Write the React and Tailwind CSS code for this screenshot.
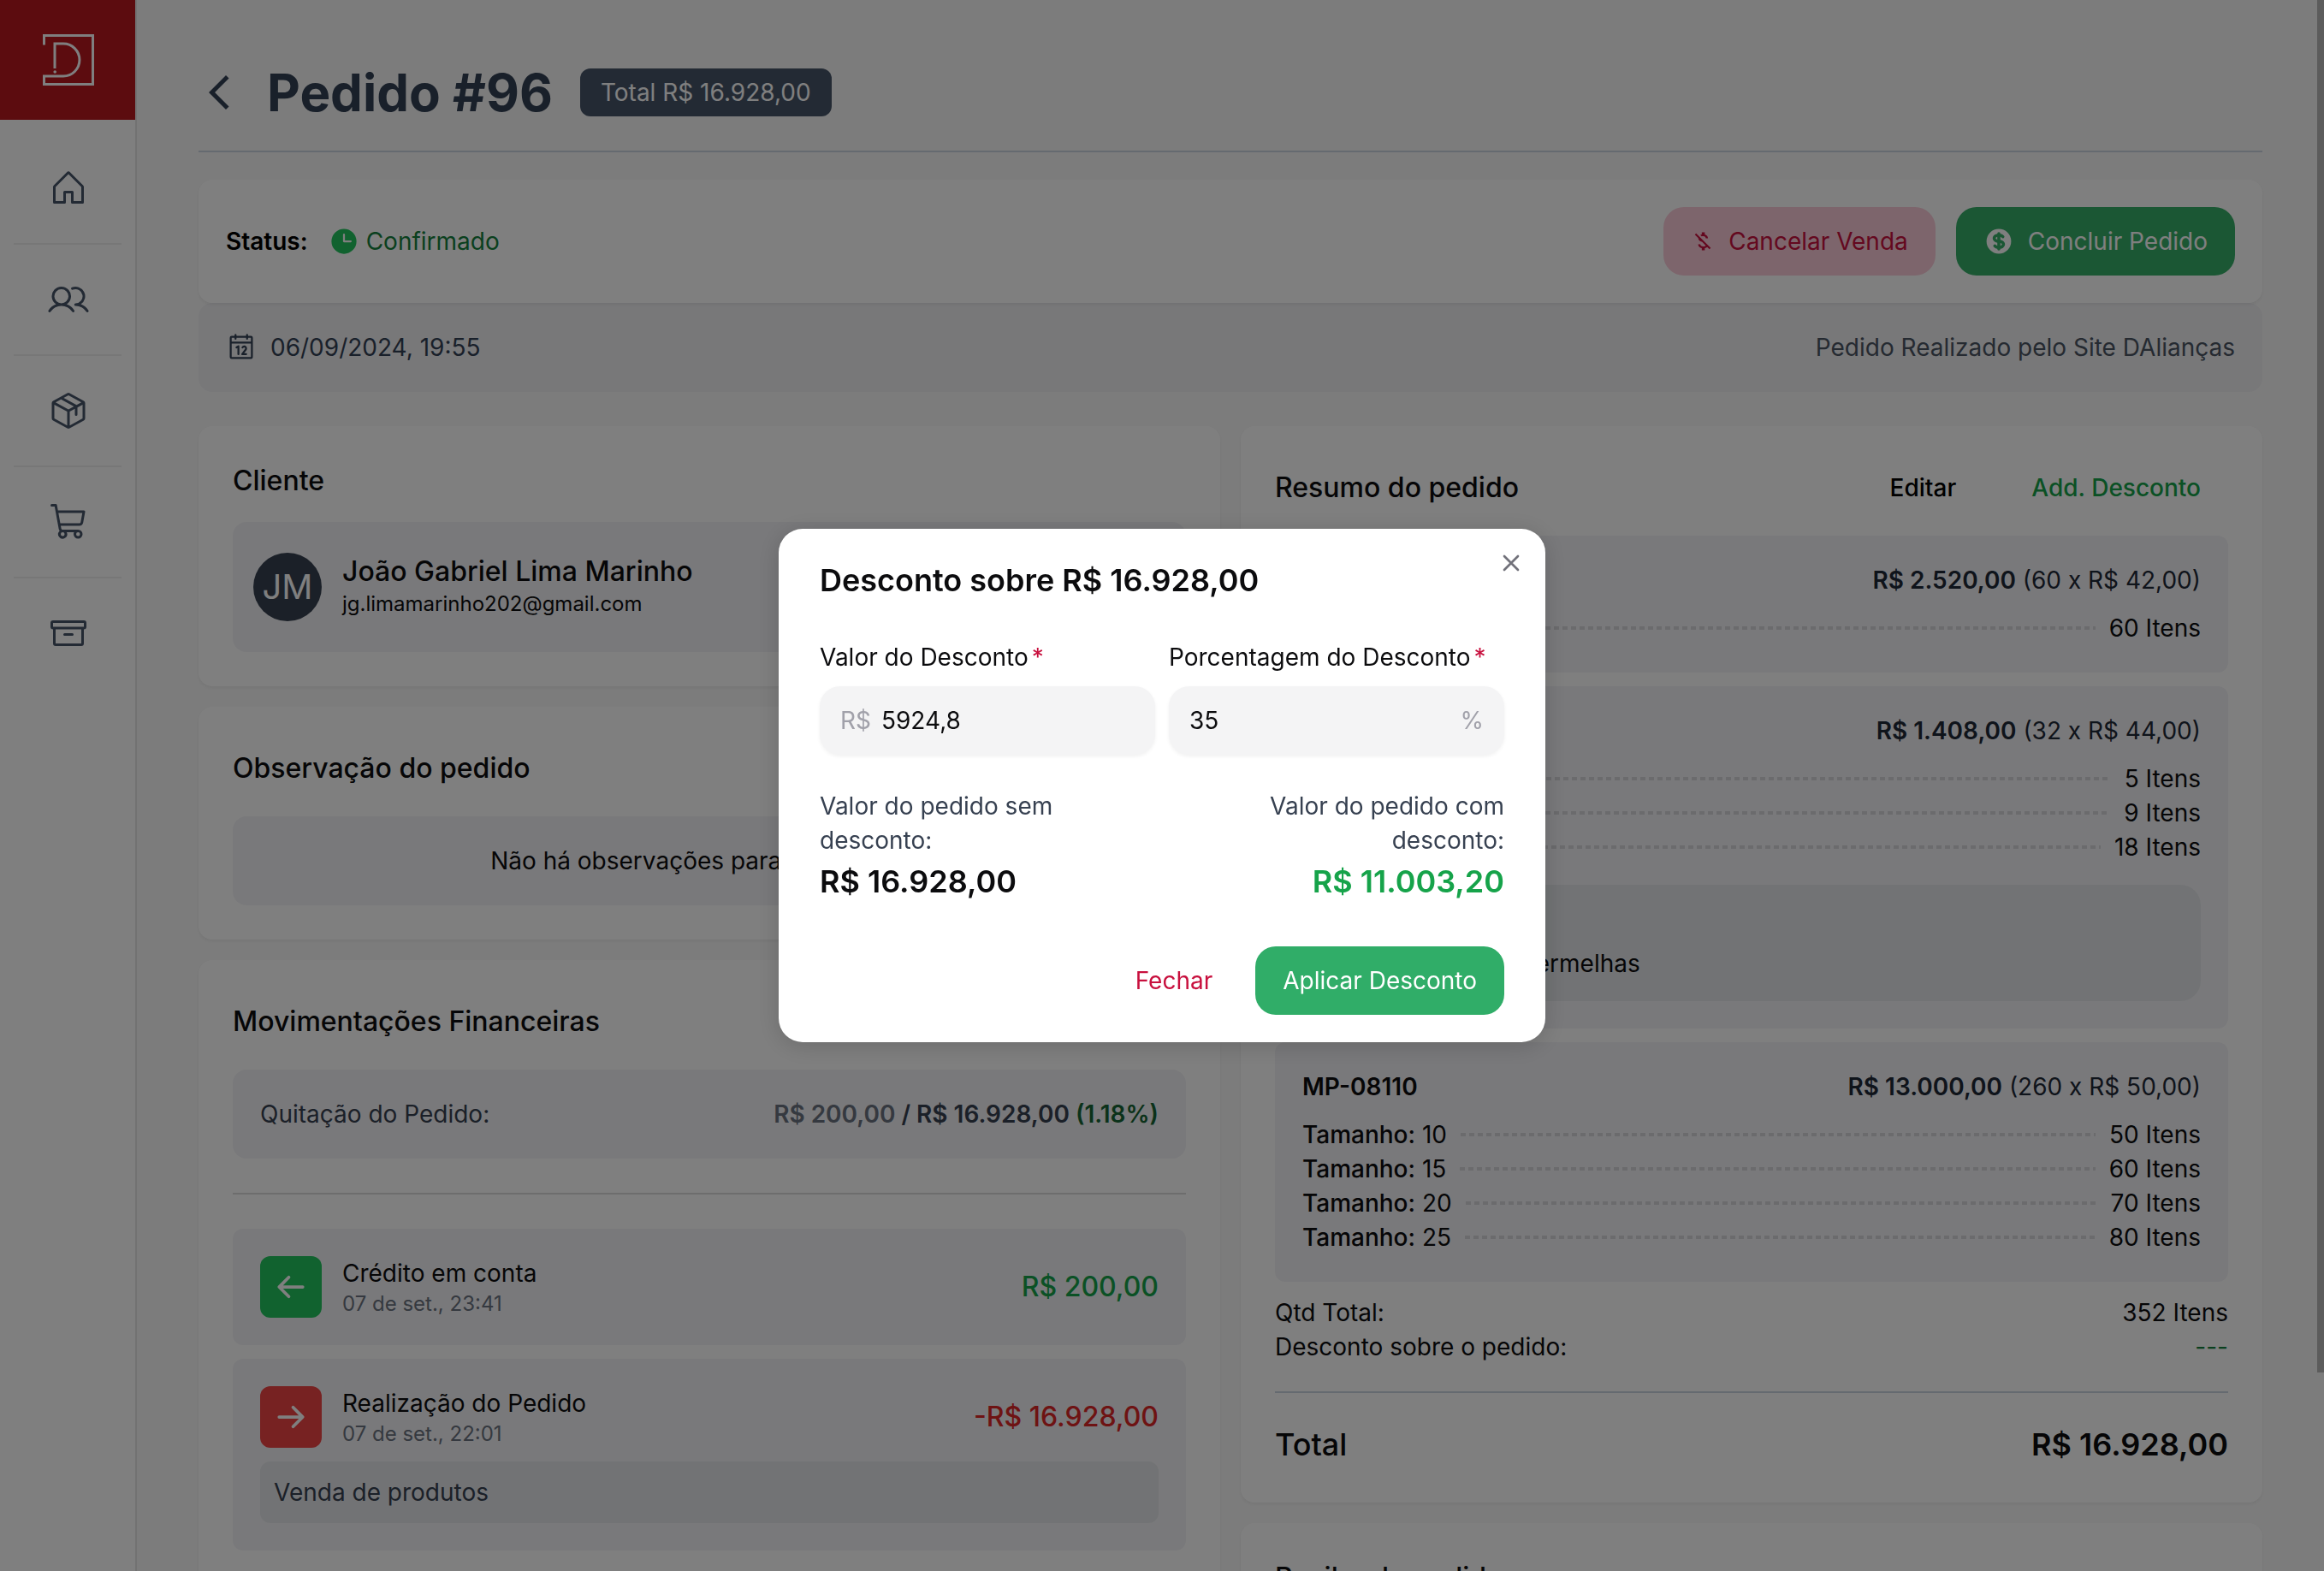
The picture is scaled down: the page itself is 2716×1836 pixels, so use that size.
import React, { useState } from "react";
import {
  PiHouse,
  PiUsers,
  PiPackage,
  PiShoppingCart,
  PiArchive,
  PiCalendar,
  PiClockFill,
  PiArrowLeftBold,
  PiArrowRightBold,
} from "react-icons/pi";
import { HiCurrencyDollar } from "react-icons/hi";
import { MdArrowBackIosNew, MdMoneyOff } from "react-icons/md";

const navItems = [
  { label: "Início", Icon: PiHouse },
  { label: "Clientes", Icon: PiUsers },
  { label: "Produtos", Icon: PiPackage },
  { label: "Pedidos", Icon: PiShoppingCart },
  { label: "Estoque", Icon: PiArchive },
];

const products = [
  {
    code: "MP-08090",
    total: "R$ 2.520,00",
    detail: "(60 x R$ 42,00)",
    sizes: [["15", "60 Itens"]],
  },
  {
    code: "MP-08100",
    total: "R$ 1.408,00",
    detail: "(32 x R$ 44,00)",
    sizes: [
      ["10", "5 Itens"],
      ["15", "9 Itens"],
      ["20", "18 Itens"],
    ],
    note: "Aros com pedras vermelhas",
  },
  {
    code: "MP-08110",
    total: "R$ 13.000,00",
    detail: "(260 x R$ 50,00)",
    sizes: [
      ["10", "50 Itens"],
      ["15", "60 Itens"],
      ["20", "70 Itens"],
      ["25", "80 Itens"],
    ],
  },
];

function Logo() {
  return (
    <svg viewBox="0 0 60 60" className="size-[60px]" fill="none" stroke="white" strokeWidth="3">
      <path d="M1.5 12.5V1.5h57v57h-57v-9.5h22.5a18.8 18.8 0 0 0 0-37.9H14V40" />
      <circle cx="14.2" cy="44" r="1.8" fill="white" stroke="none" />
    </svg>
  );
}

function Sidebar() {
  return (
    <aside className="flex w-40 shrink-0 flex-col border-r-2 border-[#e5e5e5] bg-white">
      <a href="#inicio" aria-label="DAlianças" className="flex h-[140px] items-center justify-center bg-[#b8181f] pl-0.5">
        <Logo />
      </a>
      <nav className="mt-4 flex flex-col divide-y-2 divide-[#efefef] px-4">
        {navItems.map(({ label, Icon }) => (
          <a key={label} href={"#" + label} aria-label={label} className="flex h-[130px] items-center justify-center pl-0.5 text-[#475569] last:h-32">
            <Icon className="size-12" />
          </a>
        ))}
      </nav>
    </aside>
  );
}

function Card({ title, actions, short, children }) {
  return (
    <section className="rounded-2xl bg-white p-10 shadow-[0_2px_4px_rgba(0,0,0,0.06)]">
      <div className={(short ? "h-12" : "h-16") + " mb-6 flex items-center justify-between"}>
        <h2 className="text-[32px] font-medium">{title}</h2>
        {actions}
      </div>
      {children}
    </section>
  );
}

function Movement({ incoming, title, date, amount, note }) {
  return (
    <li className="flex flex-col gap-4 rounded-xl bg-[#f3f3f6] p-8">
      <div className="flex items-center gap-6">
        <span className={(incoming ? "bg-[#22c55e]" : "bg-[#ef4444]") + " flex size-[72px] items-center justify-center rounded-xl text-white"}>
          {incoming ? <PiArrowLeftBold className="size-10" /> : <PiArrowRightBold className="size-10" />}
        </span>
        <div className="flex-1">
          <p className="leading-10">{title}</p>
          <p className="text-2xl text-[#6b7280]">{date}</p>
        </div>
        <p className={(incoming ? "text-[#16a34a]" : "text-[#dc2626]") + " text-[32px] font-medium"}>{amount}</p>
      </div>
      {note && <p className="rounded-xl bg-[#e4e7ea] p-4 leading-10 text-[#374151]">{note}</p>}
    </li>
  );
}

function Product({ code, total, detail, sizes, note }) {
  return (
    <li className="rounded-xl bg-[#f3f3f6] p-8">
      <div className="mb-4 flex justify-between">
        <h3 className="font-semibold">{code}</h3>
        <p className="text-[#1f2937]">
          <strong className="font-semibold">{total}</strong> {detail}
        </p>
      </div>
      {sizes.map(([size, count]) => (
        <div key={size} className="flex items-center gap-4">
          <p>
            <span className="font-medium">Tamanho:</span> {size}
          </p>
          <span className="h-1 flex-1 bg-[repeating-linear-gradient(90deg,#d6d6da_0_6px,transparent_6px_10px)]" />
          <p>{count}</p>
        </div>
      ))}
      {note && (
        <div className="mt-6 flex flex-col gap-2 rounded-3xl bg-[#e4e7ea] p-6">
          <p className="font-medium">Observação:</p>
          <p>{note}</p>
        </div>
      )}
    </li>
  );
}

function Field({ id, label, value, onChange, prefix, suffix }) {
  return (
    <div className="min-w-0 flex-1">
      <label htmlFor={id} className="mb-3.5 block leading-10">
        {label}
        <span className="ml-1 text-[#c8103e]">*</span>
      </label>
      <div className="flex h-20 items-center rounded-3xl bg-[#f4f4f5] px-6 shadow-[0_2px_4px_rgba(0,0,0,0.06)]">
        {prefix && <span className="mr-3 text-[#a1a1aa]">{prefix}</span>}
        <input id={id} value={value} onChange={onChange} className="min-w-0 flex-1 bg-transparent outline-none" />
        {suffix && <span className="text-[#a1a1aa]">{suffix}</span>}
      </div>
    </div>
  );
}

function DiscountDialog() {
  const [amount, setAmount] = useState("5924,8");
  const [percent, setPercent] = useState("35");
  return (
    <div className="fixed inset-0 z-10 flex items-center justify-center bg-black/50">
      <div role="dialog" aria-modal="true" aria-labelledby="discount-title" className="relative w-4xl rounded-[28px] bg-white px-12 py-8 shadow-[0_4px_28px_rgba(0,0,0,0.16)]">
        <button type="button" aria-label="Fechar janela" className="absolute top-4 right-4 flex size-12 items-center justify-center text-[#71717a]">
          <svg viewBox="0 0 24 24" className="size-8" fill="none" stroke="currentColor" strokeWidth="2" strokeLinecap="round">
            <path d="M6 6l12 12M18 6L6 18" />
          </svg>
        </button>
        <h2 id="discount-title" className="text-4xl leading-14 font-semibold">Desconto sobre R$ 16.928,00</h2>
        <div className="mt-10.5 flex gap-4">
          <Field id="amount" label="Valor do Desconto" prefix="R$" value={amount} onChange={(e) => setAmount(e.target.value)} />
          <Field id="percent" label="Porcentagem do Desconto" suffix="%" value={percent} onChange={(e) => setPercent(e.target.value)} />
        </div>
        <div className="mt-10 flex justify-between">
          <div>
            <p className="max-w-80 text-[#374151]">Valor do pedido sem desconto:</p>
            <p className="text-4xl leading-14 font-semibold">R$ 16.928,00</p>
          </div>
          <div className="text-right">
            <p className="max-w-80 text-[#374151]">Valor do pedido com desconto:</p>
            <p className="text-4xl leading-14 font-semibold text-[#16a34a]">R$ 11.003,20</p>
          </div>
        </div>
        <div className="mt-12 flex justify-end gap-4.5">
          <button type="button" className="h-20 rounded-3xl px-8 text-[#c8103e]">Fechar</button>
          <button type="button" className="h-20 rounded-3xl bg-[#30ad68] px-8 text-white">Aplicar Desconto</button>
        </div>
      </div>
    </div>
  );
}

export default function App() {
  return (
    <div className="relative flex h-screen overflow-hidden bg-[#f9f9f9] font-['Inter',sans-serif] text-[28px] leading-10 text-[#0c0c0e]">
      <Sidebar />
      <main className="min-w-0 flex-1 px-18 pt-18">
        <header className="flex items-center border-b-2 border-[#cbd5e1] pb-8">
          <button type="button" aria-label="Voltar" className="text-[#334155]">
            <MdArrowBackIosNew className="size-12" />
          </button>
          <h1 className="ml-8 text-6xl leading-18 font-bold text-[#334155]">Pedido #96</h1>
          <span className="ml-8 flex h-14 items-center rounded-xl bg-[#475569] px-6 text-white">Total R$ 16.928,00</span>
        </header>

        <div className="relative mt-8 flex h-36 items-center rounded-2xl bg-white px-8 shadow-[0_2px_4px_rgba(0,0,0,0.06)]">
          <span className="font-semibold text-black">Status:</span>
          <span className="ml-6 flex items-center gap-2 text-[#15803d]">
            <PiClockFill className="size-9 text-[#22c55e]" />
            Confirmado
          </span>
          <div className="ml-auto flex gap-6">
            <button type="button" className="flex h-20 items-center gap-4 rounded-3xl bg-[#facbd8] px-8 text-[#c8103e]">
              <MdMoneyOff className="size-7" />
              Cancelar Venda
            </button>
            <button type="button" className="flex h-20 items-center gap-4 rounded-3xl bg-[#36ae68] px-8 text-white">
              <HiCurrencyDollar className="size-9" />
              Concluir Pedido
            </button>
          </div>
        </div>
        <div className="flex h-26 items-center rounded-2xl bg-[#f0f0f3] px-8 text-[#334155]">
          <PiCalendar className="mr-4 size-9" />
          06/09/2024, 19:55
          <span className="ml-auto text-[#4b5563]">Pedido Realizado pelo Site DAlianças</span>
        </div>

        <div className="mt-10 grid grid-cols-2 items-start gap-6">
          <div className="flex flex-col gap-6">
            <Card title="Cliente" short>
              <div className="flex h-38 items-center gap-6 rounded-2xl bg-[#f3f3f6] px-6">
                <span className="flex size-20 items-center justify-center rounded-full bg-[#374151] text-[40px] text-white">JM</span>
                <div>
                  <p className="text-[32px] leading-10 font-medium">João Gabriel Lima Marinho</p>
                  <p className="text-2xl leading-9">jg.limamarinho202@gmail.com</p>
                </div>
              </div>
            </Card>
            <Card title="Observação do pedido">
              <p className="rounded-2xl bg-[#f3f3f6] p-8 text-center">Não há observações para este pedido.</p>
            </Card>
            <Card title="Movimentações Financeiras">
              <div className="flex justify-between rounded-2xl bg-[#f3f3f6] p-8 text-[#374151]">
                <p>Quitação do Pedido:</p>
                <p className="font-semibold">
                  <span className="text-[#6b7280]">R$ 200,00</span> / R$ 16.928,00 <span className="text-[#166534]">(1.18%)</span>
                </p>
              </div>
              <hr className="my-10 border-t-2 border-[#dbdbdb]" />
              <ul className="flex flex-col gap-4">
                <Movement incoming title="Crédito em conta" date="07 de set., 23:41" amount="R$ 200,00" />
                <Movement title="Realização do Pedido" date="07 de set., 22:01" amount="-R$ 16.928,00" note="Venda de produtos" />
              </ul>
            </Card>
          </div>

          <div className="flex flex-col gap-6">
            <Card
              title="Resumo do pedido"
              actions={
                <div className="flex gap-6">
                  <button type="button" className="h-16 px-8 font-medium text-black">Editar</button>
                  <button type="button" className="h-16 px-8 font-medium text-[#16a34a]">Add. Desconto</button>
                </div>
              }
            >
              <ul className="flex flex-col gap-4">
                {products.map((p) => (
                  <Product key={p.code} {...p} />
                ))}
              </ul>
              <div className="mt-4 flex justify-between">
                <p>Qtd Total:</p>
                <p>352 Itens</p>
              </div>
              <div className="flex justify-between">
                <p>Desconto sobre o pedido:</p>
                <p className="text-[#15803d]">---</p>
              </div>
              <div className="mt-8 flex justify-between border-t-2 border-[#cbd5e1] pt-8 text-4xl leading-14">
                <p className="font-medium">Total</p>
                <p className="font-semibold">R$ 16.928,00</p>
              </div>
            </Card>
            <Card title="Recibo do pedido" short />
          </div>
        </div>
      </main>
      <div className="absolute top-0 right-0 h-[1604px] w-2 bg-[#b8b8b8]" />
      <DiscountDialog />
    </div>
  );
}
